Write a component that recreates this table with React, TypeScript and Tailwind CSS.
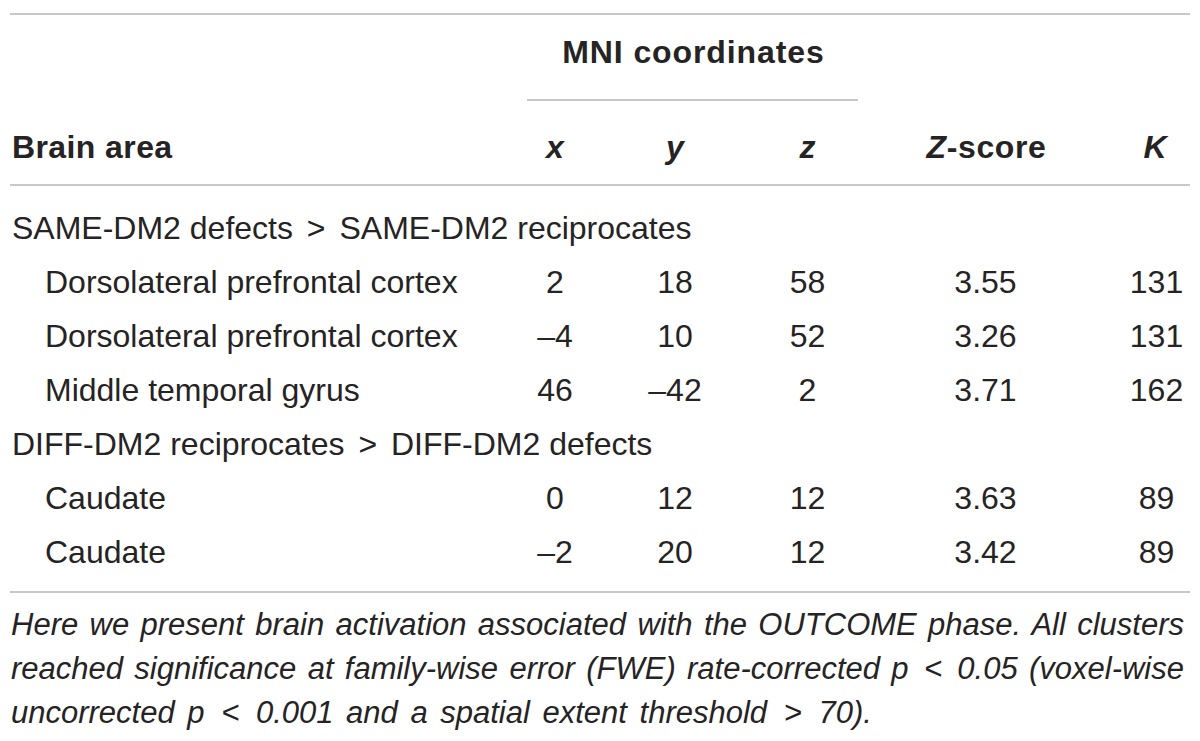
import React from "react";

type Row = {
  area: string;
  x: string;
  y: string;
  z: string;
  score: string;
  k: string;
};

type Group = {
  left: string;
  right: string;
  rows: Row[];
};

const groups: Group[] = [
  {
    left: "SAME-DM2 defects",
    right: "SAME-DM2 reciprocates",
    rows: [
      { area: "Dorsolateral prefrontal cortex", x: "2", y: "18", z: "58", score: "3.55", k: "131" },
      { area: "Dorsolateral prefrontal cortex", x: "–4", y: "10", z: "52", score: "3.26", k: "131" },
      { area: "Middle temporal gyrus", x: "46", y: "–42", z: "2", score: "3.71", k: "162" },
    ],
  },
  {
    left: "DIFF-DM2 reciprocates",
    right: "DIFF-DM2 defects",
    rows: [
      { area: "Caudate", x: "0", y: "12", z: "12", score: "3.63", k: "89" },
      { area: "Caudate", x: "–2", y: "20", z: "12", score: "3.42", k: "89" },
    ],
  },
];

const cols = "grid grid-cols-[485px_120px_120px_145px_205px_105px]";

const App = () => {
  return (
    <div className="w-[1200px] h-[741px] bg-white px-[10px] pt-[13px] font-['Liberation_Sans',Arial,sans-serif] text-[32px] text-[#262324]">
      <div className="border-t-2 border-[#c8c8c8]">
        {/* MNI spanning header */}
        <div className={cols}>
          <div className="col-start-2 col-span-3 flex flex-col">
            <div className="pt-[10px] pl-[12px] leading-[54px] text-center font-bold tracking-[0.9px]">
              MNI coordinates
            </div>
            <div className="mt-[20px] ml-[32px] mr-[22px] h-[2px] bg-[#c8c8c8]" />
          </div>
        </div>

        {/* column headings */}
        <div className={`${cols} mt-[19px] pb-[10px] leading-[54px] font-bold border-b-2 border-[#c8c8c8]`}>
          <div className="pl-[2px] tracking-[0.4px]">Brain area</div>
          <div className="text-center italic">x</div>
          <div className="text-center italic">y</div>
          <div className="text-center italic">z</div>
          <div className="text-center pl-[8px] tracking-[0.6px]">
            <span className="italic">Z</span>-score
          </div>
          <div className="text-center pl-[35px] italic">K</div>
        </div>

        {/* body */}
        <div className="pt-[15px] pb-[12px] leading-[54px] border-b-2 border-[#c8c8c8]">
          {groups.map((g) => (
            <div key={g.left}>
              <div className="pl-[2px] whitespace-nowrap">
                {g.left} <span className="mx-[5px]">&gt;</span> {g.right}
              </div>
              {g.rows.map((r, i) => (
                <div key={i} className={cols}>
                  <div className="pl-[35px] whitespace-nowrap">{r.area}</div>
                  <div className="text-center">{r.x}</div>
                  <div className="text-center">{r.y}</div>
                  <div className="text-center">{r.z}</div>
                  <div className="text-center pl-[6px]">{r.score}</div>
                  <div className="text-center pl-[38px]">{r.k}</div>
                </div>
              ))}
            </div>
          ))}
        </div>

        {/* footnote */}
        <div className="mt-[10px] italic text-[31px] leading-[44px] pl-[1px] pr-[6px]">
          <div className="text-justify [text-align-last:justify]">
            Here we present brain activation associated with the OUTCOME phase. All clusters
          </div>
          <div className="text-justify [text-align-last:justify]">
            reached significance at family-wise error (FWE) rate-corrected p{" "}
            <span className="mx-[4px]">&lt;</span> 0.05 (voxel-wise
          </div>
          <div className="[word-spacing:4px]">
            uncorrected p <span className="mx-[4px]">&lt;</span> 0.001 and a spatial extent threshold{" "}
            <span className="mx-[4px]">&gt;</span> 70).
          </div>
        </div>
      </div>
    </div>
  );
};

export default App;
